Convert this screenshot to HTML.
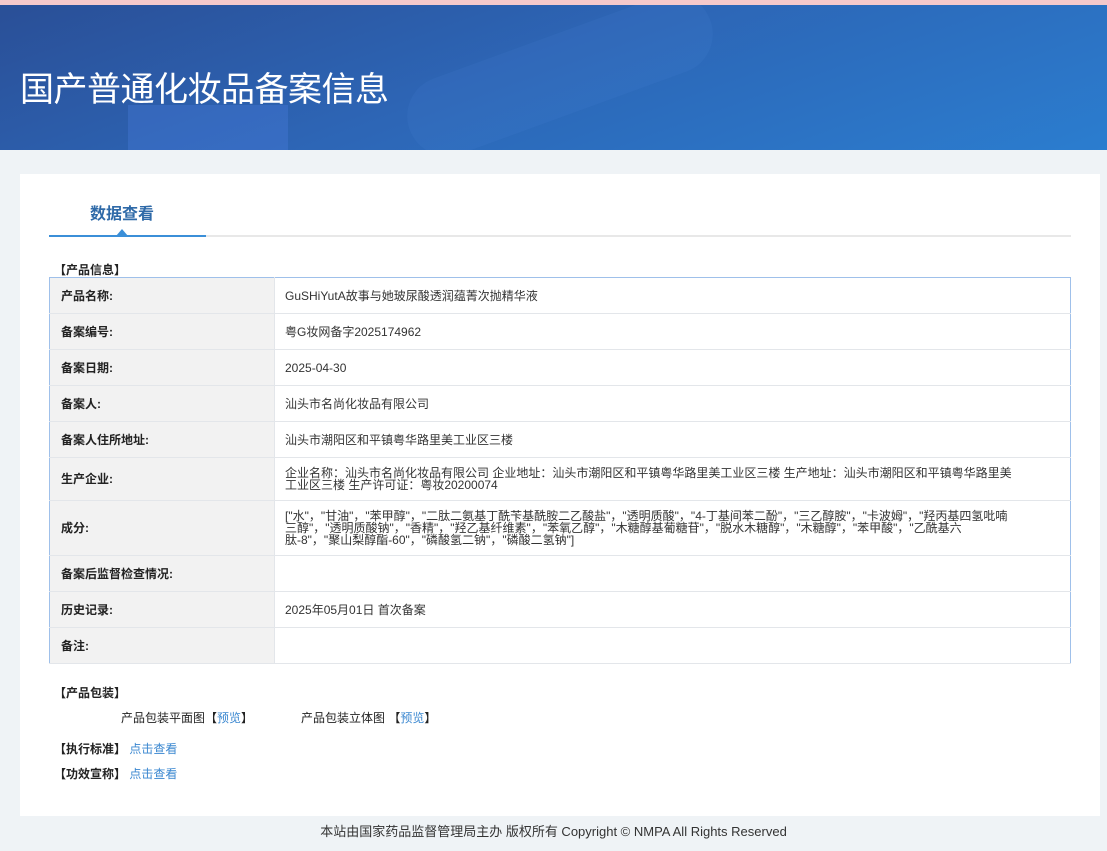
<!DOCTYPE html>
<html><head><meta charset="utf-8"><style>
*{margin:0;padding:0;box-sizing:border-box}
body{width:1107px;height:851px;background:#eff3f6;font-family:"Liberation Sans","Noto Sans CJK SC",sans-serif;font-size:12px;color:#333;position:relative;overflow:hidden}
.top{height:5px;background:#f5c9cb}
.banner{position:absolute;top:5px;left:0;width:1107px;height:145px;background:linear-gradient(160deg,#2a4f97 0%,#2d65b5 45%,#2b7dcf 100%);overflow:hidden}
.banner h1{position:absolute;left:20px;top:57px;font-size:34px;font-weight:normal;color:#fff;letter-spacing:-0.5px;font-family:"Liberation Sans","Noto Sans CJK SC",sans-serif}
.shape1{position:absolute;left:128px;top:100px;width:160px;height:60px;background:rgba(80,130,230,.3)}
.shape2{position:absolute;left:400px;top:30px;width:320px;height:80px;border-radius:40px;background:rgba(80,140,220,.12);transform:rotate(-20deg)}
.card{position:absolute;left:20px;top:174px;width:1080px;height:642px;background:#fff}
.tab{position:absolute;left:70px;top:26px;font-size:16px;font-weight:bold;color:#2f6aa8}
.tabline{position:absolute;left:29px;top:61px;width:1022px;height:2px;background:#e8e8e8}
.tabact{position:absolute;left:29px;top:61px;width:157px;height:2px;background:#3b8fd8}
.tri{position:absolute;left:96px;top:55px;width:0;height:0;border-left:6px solid transparent;border-right:6px solid transparent;border-bottom:7px solid #3b8fd8}
.sec{position:absolute;left:34px;font-weight:bold;color:#222;font-size:12px}
table{position:absolute;left:29px;top:103px;width:1022px;border-collapse:collapse;border:1px solid #9fc0ea}
td{border-bottom:1px solid #e3e6ea;vertical-align:middle;font-size:12px;line-height:12px}
td.l{width:225px;background:#f2f2f2;font-weight:bold;padding-left:11px;color:#222;border-right:1px solid #e3e6ea}
td.v{padding:0 58px 0 10px;color:#333}
a{color:#3a87d0;text-decoration:none}
.foot{position:absolute;top:821px;left:0;width:1107px;text-align:center;font-size:13px;color:#333}
</style></head><body>
<div class="top"></div>
<div class="banner"><div class="shape2"></div><div class="shape1"></div><h1>国产普通化妆品备案信息</h1></div>
<div class="card">
<div class="tab">数据查看</div>
<div class="tabline"></div><div class="tabact"></div><div class="tri"></div>
<div class="sec" style="top:87px">【产品信息】</div>
<table>
<tr style="height:36px"><td class="l">产品名称:</td><td class="v">GuSHiYutA故事与她玻尿酸透润蕴菁次抛精华液</td></tr>
<tr style="height:36px"><td class="l">备案编号:</td><td class="v">粤G妆网备字2025174962</td></tr>
<tr style="height:36px"><td class="l">备案日期:</td><td class="v">2025-04-30</td></tr>
<tr style="height:36px"><td class="l">备案人:</td><td class="v">汕头市名尚化妆品有限公司</td></tr>
<tr style="height:36px"><td class="l">备案人住所地址:</td><td class="v">汕头市潮阳区和平镇粤华路里美工业区三楼</td></tr>
<tr style="height:43px"><td class="l">生产企业:</td><td class="v">企业名称：汕头市名尚化妆品有限公司 企业地址：汕头市潮阳区和平镇粤华路里美工业区三楼 生产地址：汕头市潮阳区和平镇粤华路里美工业区三楼 生产许可证：粤妆20200074</td></tr>
<tr style="height:55px"><td class="l">成分:</td><td class="v">["水"，"甘油"，"苯甲醇"，"二肽二氨基丁酰苄基酰胺二乙酸盐"，"透明质酸"，"4-丁基间苯二酚"，"三乙醇胺"，"卡波姆"，"羟丙基四氢吡喃三醇"，"透明质酸钠"，"香精"，"羟乙基纤维素"，"苯氧乙醇"，"木糖醇基葡糖苷"，"脱水木糖醇"，"木糖醇"，"苯甲酸"，"乙酰基六肽-8"，"聚山梨醇酯-60"，"磷酸氢二钠"，"磷酸二氢钠"]</td></tr>
<tr style="height:36px"><td class="l">备案后监督检查情况:</td><td class="v"></td></tr>
<tr style="height:36px"><td class="l">历史记录:</td><td class="v">2025年05月01日 首次备案</td></tr>
<tr style="height:36px"><td class="l">备注:</td><td class="v"></td></tr>
</table>
<div class="sec" style="top:510px">【产品包装】</div>
<div style="position:absolute;left:101px;top:535px;color:#222">产品包装平面图【<a>预览</a>】</div>
<div style="position:absolute;left:281px;top:535px;color:#222">产品包装立体图 【<a>预览</a>】</div>
<div class="sec" style="top:566px">【执行标准】 <a style="font-weight:normal">点击查看</a></div>
<div class="sec" style="top:591px">【功效宣称】 <a style="font-weight:normal">点击查看</a></div>
</div>
<div class="foot">本站由国家药品监督管理局主办 版权所有 Copyright © NMPA All Rights Reserved</div>
</body></html>
